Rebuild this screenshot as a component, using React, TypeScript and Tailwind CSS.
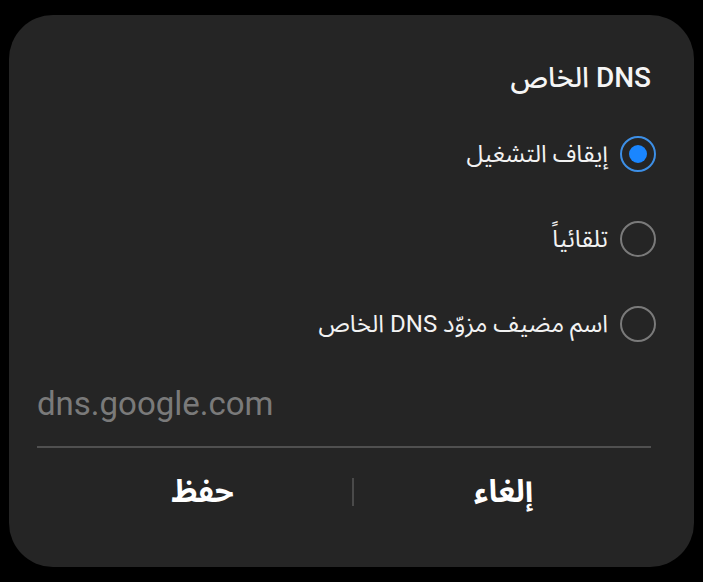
import React from "react";

const arab = { fontFamily: "Roboto, 'Noto Sans Arabic', 'DejaVu Sans', sans-serif" };

function Radio({ checked }: { checked?: boolean }) {
  return checked ? (
    <div className="w-[36px] h-[36px] rounded-full border-2 border-[#3d8fe6] flex items-center justify-center shrink-0">
      <div className="w-[18px] h-[18px] rounded-full bg-[#1a86ff]" />
    </div>
  ) : (
    <div className="w-[36px] h-[36px] rounded-full border-2 border-[#7a7a7a] shrink-0" />
  );
}

function Option({ label, checked }: { label: string; checked?: boolean }) {
  return (
    <div className="h-[85px] flex items-center gap-[12px]">
      <Radio checked={checked} />
      <span className="text-[24px] text-[#f2f2f2] leading-none">{label}</span>
    </div>
  );
}

export default function App() {
  return (
    <div className="w-[703px] h-[582px] bg-black pt-[15px] pl-[9px]" style={arab}>
      <div
        dir="rtl"
        className="w-[685px] h-[552px] rounded-[44px] bg-[#252525] pt-[40px] pr-[38px] pl-[28px] flex flex-col"
      >
        <div className="h-[46px] mr-[5px] flex items-center text-[28px] font-medium text-[#f5f5f5]">
          DNS الخاص
        </div>
        <div className="mt-[10px] flex flex-col">
          <Option label="إيقاف التشغيل" checked />
          <Option label="تلقائياً" />
          <Option label="اسم مضيف مزوّد DNS الخاص" />
        </div>
        <div className="mt-[18px] mr-[5px] pb-[22px] border-b-2 border-[#505050]">
          <div dir="ltr" className="h-[40px] flex items-center text-[33px] text-[#7a7a7a]" style={{ fontFamily: "Roboto, sans-serif" }}>
            dns.google.com
          </div>
        </div>
        <div className="h-[88px] mr-[3px] ml-[16px] flex items-center">
          <div className="flex-1 flex items-center justify-center text-[31px] font-bold text-white">إلغاء</div>
          <div className="w-[2px] h-[28px] bg-[#4a4a4a]" />
          <div className="flex-1 flex items-center justify-center text-[31px] font-bold text-white">حفظ</div>
        </div>
      </div>
    </div>
  );
}
